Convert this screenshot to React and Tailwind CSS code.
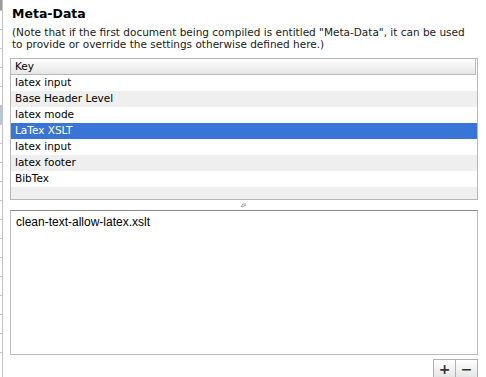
const rows = [
  { k: "latex input", bg: "bg-white" },
  { k: "Base Header Level", bg: "bg-[#efefef]" },
  { k: "latex mode", bg: "bg-white" },
  { k: "LaTex XSLT", bg: "bg-[#3875d7]", sel: true },
  { k: "latex input", bg: "bg-white" },
  { k: "latex footer", bg: "bg-[#efefef]" },
  { k: "BibTex", bg: "bg-white" },
];

const ticks = Array.from({ length: 19 }, (_, i) => 10 + i * 19);

export default function App() {
  return (
    <div
      className="relative w-[486px] h-[377px] overflow-hidden bg-white text-black"
      style={{ fontFamily: '"DejaVu Sans", sans-serif' }}
    >
      {/* left edge of neighbouring panel */}
      <div className="absolute left-0 top-0 h-full w-[3px] border-r border-[#c4c4c4]">
        <div className="h-[10px] bg-[#9a9a9a] w-[2px]" />
        <div className="absolute left-0 top-[105px] h-[20px] w-[2px] bg-[#b9c6d8]" />
        {ticks.map((t) => (
          <div key={t} className="absolute left-0 h-px w-[2px] bg-[#c4c4c4]" style={{ top: t }} />
        ))}
      </div>

      <div className="flex flex-col pl-[10px] pr-[8px] pt-[5px]">
        <div className="pl-[2px] text-[12.5px] font-bold leading-[18px]">Meta-Data</div>
        <div className="pl-[2px] mt-[3px] text-[10.5px] leading-[12px] text-[#1a1a1a]">
          (Note that if the first document being compiled is entitled "Meta-Data", it can be used
          <br />
          to provide or override the settings otherwise defined here.)
        </div>

        <div className="mt-[8px] border border-[#b8b8b8] h-[142px] flex flex-col text-[10.5px]">
          <div className="h-[16px] flex items-center pl-[4px] bg-gradient-to-b from-white to-[#e6e6e6] border-b border-[#b8b8b8] border-r mr-[1px]">
            Key
          </div>
          {rows.map((r, i) => (
            <div
              key={i}
              className={`h-[16px] flex items-center pl-[4px] ${r.bg} ${r.sel ? "text-white" : ""}`}
            >
              {r.k}
            </div>
          ))}
          <div className="flex-1 bg-[#efefef]" />
        </div>

        <div className="h-[10px] flex items-center justify-center">
          <svg width="7" height="5" viewBox="0 0 7 5" className="ml-[-2px]">
            <path d="M1 4 L3 1 L6 1 M2 4 L6 2" stroke="#a0a0a0" strokeWidth="1" fill="none" />
          </svg>
        </div>

        <div
          className="h-[145px] border border-[#bdbdbd] border-t-[#8a8a8a] pl-[5px] pt-[2px] text-[12px]"
          style={{ fontFamily: '"Liberation Sans", sans-serif' }}
        >
          clean-text-allow-latex.xslt
        </div>

        <div className="flex justify-end mt-[4px]">
          <div className="flex border border-[#b0b0b0] border-b-0 h-[19px]">
            <button className="w-[22px] flex items-center justify-center bg-gradient-to-b from-white to-[#e4e4e4] border-r border-[#b0b0b0] text-[#333] text-[14px] font-bold leading-[14px]">
              +
            </button>
            <button className="w-[21px] flex items-center justify-center bg-gradient-to-b from-white to-[#e4e4e4] text-[#333] text-[14px] font-bold leading-[14px]">
              −
            </button>
          </div>
        </div>
      </div>
    </div>
  );
}
